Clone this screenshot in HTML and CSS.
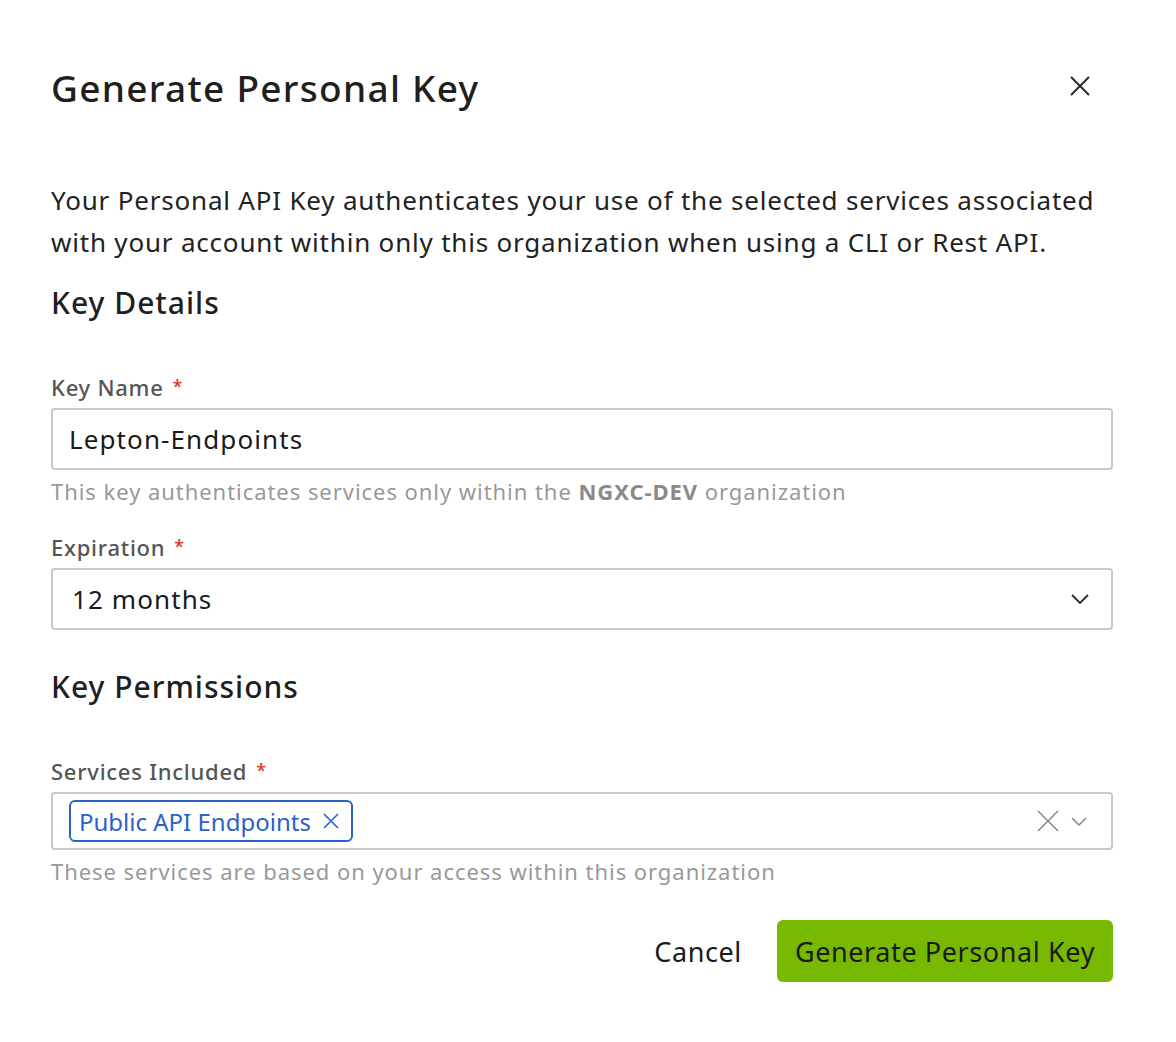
FILE: index.html
```html
<!DOCTYPE html>
<html lang="en">
<head>
<meta charset="utf-8">
<title>Generate Personal Key</title>
<link rel="stylesheet" href="styles.css">
</head>
<body>
<div class="dialog">
  <div class="header">
    <h1 class="title">Generate Personal Key</h1>
    <button class="close" aria-label="Close">
      <svg width="22" height="22" viewBox="0 0 22 22"><path d="M2 2L20 20M20 2L2 20" stroke="#2a2a2a" stroke-width="2" fill="none"/></svg>
    </button>
  </div>
  <p class="intro">Your Personal API Key authenticates your use of the selected services associated with your account within only this organization when using a CLI or Rest API.</p>
  <h2 class="section">Key Details</h2>
  <div class="field first">
    <label class="label">Key Name<span class="req">*</span></label>
    <div class="box"><span class="value">Lepton-Endpoints</span></div>
    <div class="help">This key authenticates services only within the <b>NGXC-DEV</b> organization</div>
  </div>
  <div class="field">
    <label class="label">Expiration<span class="req">*</span></label>
    <div class="box select"><span class="value sel">12 months</span>
      <svg class="chev" width="18" height="10" viewBox="0 0 18 10"><path d="M1 1L9 9L17 1" stroke="#2a2a2a" stroke-width="1.8" fill="none"/></svg>
    </div>
  </div>
  <h2 class="section perms">Key Permissions</h2>
  <div class="field first">
    <label class="label">Services Included<span class="req">*</span></label>
    <div class="box multi">
      <span class="tag">Public API Endpoints
        <svg width="16" height="16" viewBox="0 0 16 16"><path d="M1 1L15 15M15 1L1 15" stroke="#2b62c8" stroke-width="1.6" fill="none"/></svg>
      </span>
      <span class="spacer"></span>
      <svg class="clear" width="22" height="22" viewBox="0 0 22 22"><path d="M1 1L21 21M21 1L1 21" stroke="#8c8c8c" stroke-width="1.6" fill="none"/></svg>
      <svg class="chev" width="16" height="9" viewBox="0 0 16 9"><path d="M1 1L8 8L15 1" stroke="#8c8c8c" stroke-width="1.6" fill="none"/></svg>
    </div>
    <div class="help">These services are based on your access within this organization</div>
  </div>
  <div class="actions">
    <button class="btn cancel">Cancel</button>
    <button class="btn primary">Generate Personal Key</button>
  </div>
</div>
</body>
</html>
```
FILE: styles.css
```css
html, body {
  margin: 0;
  padding: 0;
  background: #ffffff;
}
body {
  font-family: "Noto Sans", "Liberation Sans", sans-serif;
  color: #1f1f1f;
}
.dialog {
  padding: 66px 63px 0 51px;
}
.header {
  display: flex;
  align-items: center;
  justify-content: space-between;
  height: 44px;
}
.title {
  margin: 0;
  font-size: 37px;
  line-height: 44px;
  font-weight: 500;
  letter-spacing: 1.3px;
  color: #1f1f1f;
}
.close {
  border: 0;
  background: none;
  padding: 0;
  margin: 9px 22px 0 0;
  align-self: flex-start;
  width: 22px;
  height: 22px;
  display: flex;
}
.intro {
  margin: 69px 0 0;
  font-size: 26px;
  line-height: 42px;
  letter-spacing: 0.8px;
  color: #222;
}
.section {
  margin: 20px 0 0;
  font-size: 30px;
  line-height: 40px;
  font-weight: 500;
  letter-spacing: 1px;
  color: #1f1f1f;
}
.section.perms {
  margin-top: 37px;
}
.field {
  margin-top: 26px;
  display: flex;
  flex-direction: column;
}
.field.first {
  margin-top: 49px;
}
.label {
  font-size: 22px;
  line-height: 30px;
  font-weight: 500;
  letter-spacing: 0.75px;
  color: #555555;
  margin-bottom: 6px;
}
.req {
  color: #e0302a;
  margin-left: 9px;
  font-size: 18px;
  line-height: 0;
  vertical-align: 3px;
}
.box {
  box-sizing: border-box;
  height: 62px;
  border: 2px solid #c8c8c8;
  border-radius: 4px;
  display: flex;
  align-items: center;
  padding: 0 16px;
}
.value {
  font-size: 26px;
  letter-spacing: 1.1px;
  color: #1a1a1a;
}
.value.sel {
  margin-left: 3px;
}
.select {
  justify-content: space-between;
  padding-right: 22px;
}
.multi {
  height: 58px;
  padding: 0 24px 0 16px;
  gap: 12px;
}
.spacer {
  flex: 1;
}
.tag {
  display: inline-flex;
  align-items: center;
  gap: 12px;
  box-sizing: border-box;
  height: 42px;
  padding: 0 12px 0 8px;
  border: 2px solid #2b62c8;
  border-radius: 6px;
  font-size: 24px;
  color: #2b62c8;
}
.help {
  margin-top: 6px;
  font-size: 22px;
  line-height: 30px;
  letter-spacing: 0.95px;
  color: #999999;
}
.help b {
  font-weight: 700;
  color: #8a8a8a;
}
.actions {
  margin-top: 34px;
  display: flex;
  justify-content: flex-end;
  align-items: center;
  gap: 18px;
}
.btn {
  font-family: inherit;
  border: 0;
  height: 62px;
  font-size: 27px;
  letter-spacing: 0.6px;
  color: #1a1a1a;
  white-space: nowrap;
  cursor: pointer;
}
.cancel {
  background: none;
  padding: 0 17px;
}
.primary {
  background: #76b900;
  border-radius: 6px;
  padding: 0 18px;
}
```
